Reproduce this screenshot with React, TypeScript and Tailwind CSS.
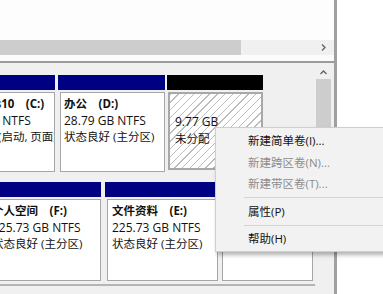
import React from "react";

const font = { fontFamily: '"Open Sans", "Noto Sans CJK SC", sans-serif' };

function Chevron({ dir }: { dir: "right" | "up" }) {
  return (
    <svg width="7" height="7" viewBox="0 0 7 7" className="text-[#606060]">
      {dir === "right" ? (
        <polyline points="2,0.5 5,3.5 2,6.5" fill="none" stroke="currentColor" strokeWidth="1.3" />
      ) : (
        <polyline points="0.5,5 3.5,2 6.5,5" fill="none" stroke="currentColor" strokeWidth="1.3" />
      )}
    </svg>
  );
}

interface PartProps {
  name: string;
  size: string;
  status: string;
  width: string;
  offset?: string;
  pad?: string;
}

function Partition({ name, size, status, width, offset = "", pad = "pl-[3px]" }: PartProps) {
  return (
    <div className={`flex flex-col shrink-0 ${width} ${offset}`}>
      <div className="h-[15px] bg-[#000082]" />
      <div className="flex-1 pl-[2px] pt-[2px]">
        <div className={`h-full border border-[#a6a6a6] bg-white overflow-hidden whitespace-nowrap ${pad} pt-[3px] text-[11.5px] leading-[16.5px] text-[#111]`}>
          <div className="font-bold">{name}</div>
          <div className="text-[12px]">{size}</div>
          <div>{status}</div>
        </div>
      </div>
    </div>
  );
}

function MenuItem({ label, disabled }: { label: string; disabled?: boolean }) {
  return (
    <div className={`h-[21.5px] flex items-center pl-[32px] text-[11.5px] ${disabled ? "text-[#8c8c8c]" : "text-[#111]"}`}>
      {label}
    </div>
  );
}

function Separator() {
  return (
    <div className="h-[6px] flex items-center pl-[28px]">
      <div className="h-px flex-1 bg-[#d5d5d5]" />
    </div>
  );
}

export default function App() {
  return (
    <div className="relative w-[383px] h-[294px] overflow-hidden bg-white" style={font}>
      <div className="flex h-full">
        <div className="w-[334px] flex flex-col">
          <div className="h-[40px] bg-[#fdfdfd]" />
          <div className="h-[15px] flex bg-[#f0f0f0]">
            <div className="w-[241px] bg-[#cdcdcd]" />
            <div className="flex-1 flex items-center justify-end pr-[7px]">
              <Chevron dir="right" />
            </div>
          </div>
          <div className="h-[6px] bg-[#fbfbfb]" />
          <div className="h-[2px] bg-[#9c9c9c]" />
          <div className="flex-1 flex bg-[#f0f0f0]">
            <div className="w-[315px] overflow-hidden pt-[12px] flex flex-col">
              <div className="h-[97px] flex">
                <Partition
                  name={"Windows10\u3000(C:)"}
                  size="80.00 GB NTFS"
                  status="状态良好 (启动, 页面文件, 故障转储, 主分区)"
                  width="w-[112px]"
                  offset="ml-[-57px]"
                />
                <div className="w-[3px]" />
                <Partition name={"办公\u3000(D:)"} size="28.79 GB NTFS" status="状态良好 (主分区)" width="w-[107px]" />
                <div className="w-[2px]" />
                <div className="w-[96px] flex flex-col">
                  <div className="h-[15px] bg-black" />
                  <div className="flex-1 pl-px pt-[2px] pb-[2px]">
                    <div className="h-full border-2 border-[#a8a8a8] bg-[repeating-linear-gradient(135deg,#bcbcbc_0px,#bcbcbc_1px,#ffffff_1px,#ffffff_5.5px)] pl-[5px] pt-[20px] text-[11.5px] leading-[16.5px] text-[#111]">
                      <div className="text-[12px]">9.77 GB</div>
                      <div>未分配</div>
                    </div>
                  </div>
                </div>
              </div>
              <div className="h-[10px]" />
              <div className="h-[99px] flex">
                <Partition
                  name={"个人空间\u3000(F:)"}
                  size="225.73 GB NTFS"
                  status="状态良好 (主分区)"
                  width="w-[115px]"
                  offset="ml-[-14px]"
                />
                <div className="w-[4px]" />
                <Partition name={"文件资料\u3000(E:)"} size="225.73 GB NTFS" status="状态良好 (主分区)" width="w-[113px]" pad="pl-[4px]" />
                <div className="w-[2px]" />
                <Partition name="" size="" status="" width="w-[93px]" />
              </div>
              <div className="h-[3px]" />
              <div className="h-[2px] bg-[#b4b4b4]" />
            </div>
            <div className="w-[19px] flex flex-col pl-px">
              <div className="h-[16px] flex items-center justify-center pr-[3px] pt-[2px]">
                <Chevron dir="up" />
              </div>
              <div className="w-[15px] h-[150px] bg-[#cdcdcd]" />
            </div>
          </div>
        </div>
        <div className="w-[3px] bg-[#a0a0a0]" />
        <div className="flex-1 bg-white" />
      </div>

      <div className="absolute left-[215px] top-[127px] w-[180px] h-[125px] bg-[#f2f2f2] border border-[#cfcfcf] shadow-[2px_3px_4px_rgba(0,0,0,0.3)] pt-[2px]">
        <MenuItem label="新建简单卷(I)..." />
        <MenuItem label="新建跨区卷(N)..." disabled />
        <MenuItem label="新建带区卷(T)..." disabled />
        <Separator />
        <MenuItem label="属性(P)" />
        <Separator />
        <MenuItem label="帮助(H)" />
      </div>
    </div>
  );
}
